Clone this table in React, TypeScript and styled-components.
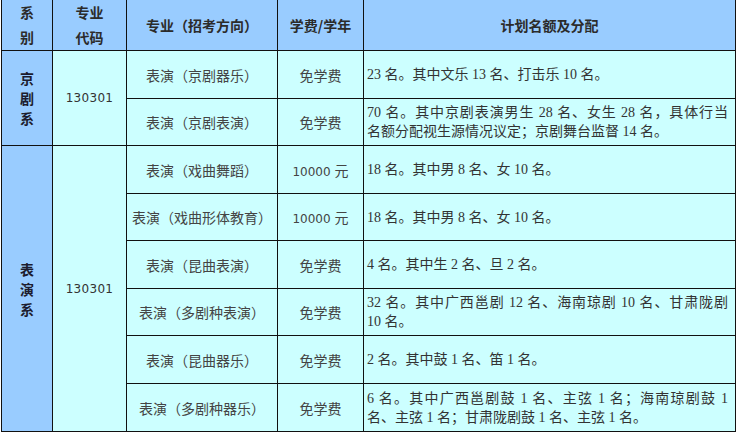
import React, { FC } from 'react'
import styled, { createGlobalStyle } from 'styled-components'

const GlobalStyle = createGlobalStyle`
  html, body {
    margin: 0;
    padding: 0;
    background: #ffffff;
  }
  body {
    padding-left: 1px;
    font-family: "Liberation Serif", "Noto Sans CJK SC", serif;
  }
`

const Table = styled.table`
  border-collapse: collapse;
  table-layout: fixed;
  width: 735px;
  color: #3a3a3a;
  font-size: 14px;
`

const HeadRow = styled.tr`
  height: 50px;
  background: #99ccff;
`

const HeadCell = styled.th`
  border: 1px solid #111;
  border-top: none;
  padding: 0;
  text-align: center;
  vertical-align: middle;
  font-family: "Noto Sans CJK SC", sans-serif;
  font-weight: 700;
  font-size: 14px;
  line-height: 25px;
  color: #2b2b2b;
`

const BodyRow = styled.tr<{ $h: number }>`
  height: ${p => p.$h}px;
  background: #ccffff;
`

const DeptCell = styled.td`
  border: 1px solid #111;
  background: #99ccff;
  text-align: center;
  vertical-align: middle;
  padding: 0;
  font-family: "Noto Sans CJK SC", sans-serif;
  font-weight: 700;
  font-size: 14px;
  line-height: 20px;
  color: #1c1c2e;
`

const CodeCell = styled.td`
  border: 1px solid #111;
  text-align: center;
  vertical-align: middle;
  padding: 0;
  font-family: "DejaVu Sans", sans-serif;
  font-size: 12px;
  letter-spacing: 0.3px;
  color: #333;
`

const MajorCell = styled.td`
  border: 1px solid #111;
  text-align: center;
  vertical-align: middle;
  padding: 0 2px;
  font-family: "Noto Sans CJK SC", sans-serif;
  font-size: 14px;
  color: #444;
  white-space: nowrap;
`

const FeeCell = styled.td`
  border: 1px solid #111;
  text-align: center;
  vertical-align: middle;
  padding: 0;
  font-family: "Noto Sans CJK SC", sans-serif;
  font-size: 14px;
  color: #444;
`

const FeeNum = styled.span`
  font-family: "DejaVu Sans", sans-serif;
  font-size: 12px;
  margin-right: 4px;
`

const PlanCell = styled.td`
  border: 1px solid #111;
  vertical-align: middle;
  padding: 0 7px 0 3px;
  font-family: "Liberation Serif", "Noto Sans CJK SC", serif;
  font-size: 14px;
  line-height: 19px;
  color: #333;
`

const PlanLine = styled.span<{ $fill: boolean }>`
  display: block;
  white-space: nowrap;
  text-align: ${p => (p.$fill ? 'justify' : 'left')};
  text-align-last: ${p => (p.$fill ? 'justify' : 'left')};
`

const Stack = styled.span`
  display: block;
`

type Major = {
  major: string
  fee: string
  plan: string[]
  h: number
}

type Dept = {
  name: string[]
  code: string
  rows: Major[]
}

const depts: Dept[] = [
  {
    name: ['京', '剧', '系'],
    code: '130301',
    rows: [
      { major: '表演（京剧器乐）', fee: '免学费', plan: ['23 名。其中文乐 13 名、打击乐 10 名。'], h: 48 },
      {
        major: '表演（京剧表演）',
        fee: '免学费',
        plan: ['70 名。其中京剧表演男生 28 名、女生 28 名，具体行当', '名额分配视生源情况议定；京剧舞台监督 14 名。'],
        h: 47,
      },
    ],
  },
  {
    name: ['表', '演', '系'],
    code: '130301',
    rows: [
      { major: '表演（戏曲舞蹈）', fee: '10000', plan: ['18 名。其中男 8 名、女 10 名。'], h: 48 },
      { major: '表演（戏曲形体教育）', fee: '10000', plan: ['18 名。其中男 8 名、女 10 名。'], h: 47 },
      { major: '表演（昆曲表演）', fee: '免学费', plan: ['4 名。其中生 2 名、旦 2 名。'], h: 48 },
      {
        major: '表演（多剧种表演）',
        fee: '免学费',
        plan: ['32 名。其中广西邕剧 12 名、海南琼剧 10 名、甘肃陇剧', '10 名。'],
        h: 47,
      },
      { major: '表演（昆曲器乐）', fee: '免学费', plan: ['2 名。其中鼓 1 名、笛 1 名。'], h: 48 },
      {
        major: '表演（多剧种器乐）',
        fee: '免学费',
        plan: ['6 名。其中广西邕剧鼓 1 名、主弦 1 名；海南琼剧鼓 1', '名、主弦 1 名；甘肃陇剧鼓 1 名、主弦 1 名。'],
        h: 48,
      },
    ],
  },
]

const Fee: FC<{ value: string }> = ({ value }) =>
  /^\d+$/.test(value) ? (
    <>
      <FeeNum>{value}</FeeNum>元
    </>
  ) : (
    <>{value}</>
  )

const App: FC = () => {
  return (
    <>
      <GlobalStyle />
      <Table>
        <colgroup>
          <col style={{ width: 51 }} />
          <col style={{ width: 74 }} />
          <col style={{ width: 151 }} />
          <col style={{ width: 86 }} />
          <col />
        </colgroup>
        <thead>
          <HeadRow>
            <HeadCell>
              <Stack>系</Stack>
              <Stack>别</Stack>
            </HeadCell>
            <HeadCell>
              <Stack>专业</Stack>
              <Stack>代码</Stack>
            </HeadCell>
            <HeadCell>专业（招考方向）</HeadCell>
            <HeadCell>学费/学年</HeadCell>
            <HeadCell>计划名额及分配</HeadCell>
          </HeadRow>
        </thead>
        <tbody>
          {depts.map(d =>
            d.rows.map((r, i) => (
              <BodyRow key={d.name.join('') + i} $h={r.h}>
                {i === 0 && (
                  <>
                    <DeptCell rowSpan={d.rows.length}>
                      {d.name.map(c => (
                        <Stack key={c}>{c}</Stack>
                      ))}
                    </DeptCell>
                    <CodeCell rowSpan={d.rows.length}>{d.code}</CodeCell>
                  </>
                )}
                <MajorCell>{r.major}</MajorCell>
                <FeeCell>
                  <Fee value={r.fee} />
                </FeeCell>
                <PlanCell>
                  {r.plan.map((line, j) => (
                    <PlanLine key={j} $fill={j < r.plan.length - 1}>
                      {line}
                    </PlanLine>
                  ))}
                </PlanCell>
              </BodyRow>
            ))
          )}
        </tbody>
      </Table>
    </>
  )
}

export default App
